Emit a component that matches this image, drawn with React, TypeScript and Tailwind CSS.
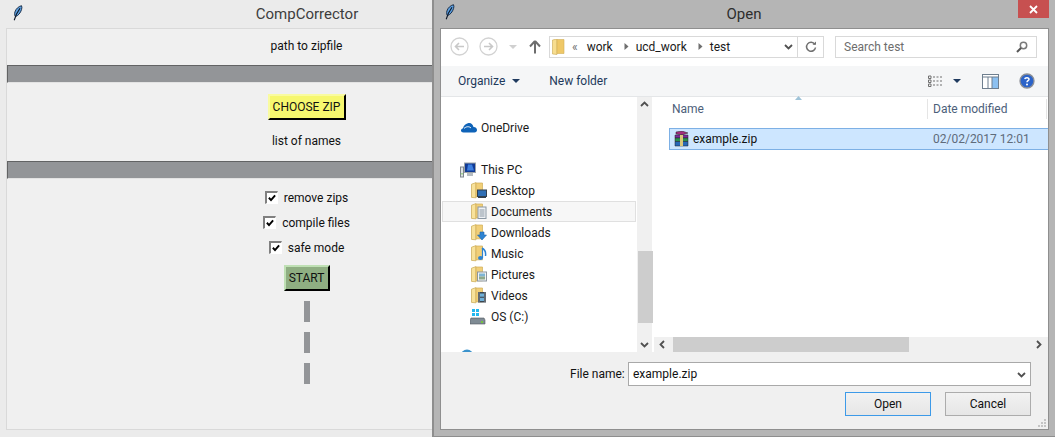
import React from "react";

const font = { fontFamily: 'Roboto,"Noto Sans",sans-serif' };

function Feather({ className = "" }: { className?: string }) {
  return (
    <svg width="10" height="16" viewBox="0 0 10 16" className={className}>
      <path d="M8.5 .7C5.6 1.4 2.8 3.8 1.9 7 1.4 9 1.6 10.8 2.4 11.6 5.2 10.8 7.6 7.8 8.6 4.4 9 3 9 1.6 8.5 .7Z" fill="#5b9fe0" stroke="#10233d" strokeWidth=".9" />
      <path d="M7 3.2 3.4 9.2 1.2 15.2" fill="none" stroke="#0b1626" strokeWidth="1.1" />
    </svg>
  );
}

function Sunken() {
  return <div className="h-[18px] w-full shrink-0 border-t border-l border-b border-t-[#626364] border-l-[#626364] border-b-[#e3e3e3] bg-[#939598]" />;
}

function Check({ label }: { label: string }) {
  return (
    <div className="flex h-[25px] items-center gap-[6px] text-[12px] text-[#111]">
      <div className="flex h-[13px] w-[13px] items-center justify-center border-t-2 border-l-2 border-r border-b border-t-[#808080] border-l-[#808080] border-r-white border-b-white bg-white">
        <svg width="8" height="8" viewBox="0 0 9 9"><path d="M1 4.2 3.4 6.8 8 1.6" fill="none" stroke="#000" strokeWidth="2.200" /></svg>
      </div>
      <span className="leading-none">{label}</span>
    </div>
  );
}

function FolderBase({ children }: { children?: React.ReactNode }) {
  return (
    <svg width="16" height="17" viewBox="0 0 16 17" className="shrink-0">
      <path d="M.5 2.2 5 .6V15.8L.5 15.4Z" fill="#f8e29b" stroke="#c9a850" strokeWidth=".7" />
      <path d="M5 1H11.500V14.800H5Z" fill="#f1cf78" stroke="#d0ae58" strokeWidth=".7" />
      {children}
    </svg>
  );
}

function NavIcon({ kind }: { kind: string }) {
  if (kind === "desktop")
    return <FolderBase><rect x="6.5" y="8" width="9" height="6.5" fill="#2f6fb5" stroke="#33414f" /><rect x="7" y="14.5" width="8" height="1.5" fill="#33414f" /></FolderBase>;
  if (kind === "documents")
    return <FolderBase><rect x="7" y="4" width="8" height="11.5" fill="#eef1f4" stroke="#8a97a3" /><path d="M8.5 7h5M8.5 9h5M8.5 11h5M8.5 13h5" stroke="#8a97a3" /></FolderBase>;
  if (kind === "downloads")
    return <FolderBase><path d="M9 8h4v3h2.5L11 16 6.5 11H9Z" fill="#2d83d2" stroke="#1e65ad" strokeWidth=".6" /></FolderBase>;
  if (kind === "music")
    return <FolderBase><path d="M11 3c3 1.500 4 4.500 3.500 8" fill="none" stroke="#2d83d2" strokeWidth="1.500" /><ellipse cx="9.500" cy="13" rx="2.500" ry="2" fill="#2d83d2" /><path d="M11.500 13V3" stroke="#2d83d2" strokeWidth="1.200" /></FolderBase>;
  if (kind === "pictures")
    return <FolderBase><rect x="6.500" y="6" width="9" height="9" fill="#f2f4f5" stroke="#8c969e" /><rect x="8" y="7.500" width="6" height="3" fill="#7fb5d5" /><rect x="8" y="10.500" width="6" height="3" fill="#8fa98c" /></FolderBase>;
  return <FolderBase><rect x="7" y="5" width="8" height="10.500" fill="#3c4650" /><rect x="9" y="6.500" width="4" height="3.200" fill="#6fb0d8" /><rect x="9" y="10.800" width="4" height="3.200" fill="#6fb0d8" /><path d="M8 5.500v10M14 5.500v10" stroke="#d5d9dc" strokeDasharray="1 1" /></FolderBase>;
}

function NavItem({ kind, label, active }: { kind: string; label: string; active?: boolean }) {
  return (
    <div className={`ml-[1px] flex h-[21px] w-[194px] shrink-0 items-center gap-[4px] text-[12px] text-[#1a1a1a] ${active ? "border border-[#e0e0e0] bg-[#f7f7f7] pl-[28px]" : "pl-[29px]"}`}>
      <NavIcon kind={kind} />
      <span className="leading-none">{label}</span>
    </div>
  );
}

function Chevron({ dir }: { dir: "up" | "down" | "left" | "right" }) {
  const d = { up: "M1 6 4.500 2.500 8 6", down: "M1 3 4.500 6.500 8 3", left: "M6 1 2.500 4.500 6 8", right: "M3 1 6.500 4.500 3 8" }[dir];
  return <svg width="9" height="9" viewBox="0 0 9 9"><path d={d} fill="none" stroke="#505050" strokeWidth="1.800" /></svg>;
}

function Circle({ left }: { left?: boolean }) {
  return (
    <svg width="19" height="19" viewBox="0 0 19 19">
      <circle cx="9.500" cy="9.500" r="8.500" fill="#fff" stroke="#d2d2d2" strokeWidth="1.300" />
      <path d={left ? "M14 9.500H6M9 6 5.500 9.500 9 13" : "M5 9.500H13M10 6 13.500 9.500 10 13"} fill="none" stroke="#c8c8c8" strokeWidth="1.600" />
    </svg>
  );
}

function Crumb() {
  return <svg width="5" height="7" viewBox="0 0 5 7"><path d="M.5 0 4.500 3.500 .5 7Z" fill="#6f6f6f" /></svg>;
}

function Caret({ color = "#1f3a5f" }: { color?: string }) {
  return <svg width="8" height="4" viewBox="0 0 8 4"><path d="M0 0H8L4 4Z" fill={color} /></svg>;
}

export default function App() {
  return (
    <div style={font} className="relative h-[437px] w-[1055px] overflow-hidden bg-[#ebebeb]">
      {/* back window */}
      <div className="absolute left-0 top-0 flex h-[437px] w-[612px] flex-col bg-[#ebebeb]">
        <div className="relative flex h-[28px] shrink-0 items-center justify-center pl-[2px] text-[15px] text-[#3d3d3d]">
          <Feather className="absolute left-[13px] top-[5px]" />
          <span>CompCorrector</span>
        </div>
        <div className="mx-[6px] mb-[7px] flex flex-1 flex-col items-center border border-[#d9d9d9] border-r-0 bg-[#f0f0f0] text-[12px] text-[#111]">
          <div className="flex h-[36px] shrink-0 items-center pb-[2px]">path to zipfile</div>
          <Sunken />
          <button className="mt-[11px] flex h-[26px] w-[78px] items-center justify-center border-2 border-t-[#f9fba0] border-l-[#f9fba0] border-r-black border-b-black bg-[#f6f76f] text-[12px] text-[#111]">CHOOSE ZIP</button>
          <div className="flex h-[41px] shrink-0 items-center">list of names</div>
          <Sunken />
          <div className="mt-[6px] flex flex-col items-center">
            <Check label="remove zips" />
            <Check label="compile files" />
            <Check label="safe mode" />
          </div>
          <button className="mt-[5px] flex h-[26px] w-[46px] items-center justify-center border-2 border-t-[#bfe0b4] border-l-[#bfe0b4] border-r-black border-b-black bg-[#8fae82] text-[12px] text-[#111]">START</button>
          <div className="mt-[10px] flex flex-col gap-[10px]">
            <div className="h-[21px] w-[6px] bg-[#939598]" />
            <div className="h-[21px] w-[6px] bg-[#939598]" />
            <div className="h-[21px] w-[6px] bg-[#939598]" />
          </div>
        </div>
      </div>

      {/* dialog */}
      <div className="absolute left-[432px] top-0 flex h-[437px] w-[623px] flex-col border-l-2 border-b border-l-[#8e8e8e] border-b-[#8e8e8e] bg-[#b5b5b5]">
        <div className="relative flex h-[28px] shrink-0 items-center justify-center text-[15px] text-[#2e2e2e]">
          <Feather className="absolute left-[11px] top-[4px]" />
          <span className="pr-[1px]">Open</span>
          <div className="absolute right-[6px] top-0 flex h-[18px] w-[31px] items-center justify-center bg-[#c75050]">
            <svg width="9" height="9" viewBox="0 0 9 9"><path d="M1 1 8 8M8 1 1 8" stroke="#fff" strokeWidth="1.800" /></svg>
          </div>
        </div>
        <div className="ml-[6px] mr-[6px] flex h-[402px] w-[609px] flex-col border border-[#8f8f8f] bg-white text-[12px] text-[#1a1a1a]">
          {/* address */}
          <div className="flex h-[37px] shrink-0 items-center pb-[2px]">
            <div className="ml-[9px] flex items-center gap-[10px]">
              <Circle left />
              <Circle />
            </div>
            <div className="ml-[11px]"><Caret color="#d0d0d0" /></div>
            <svg width="12" height="14" viewBox="0 0 12 14" className="ml-[12px]"><path d="M6 1 1 6.500M6 1l5 5.500M6 1.500V13.500" fill="none" stroke="#6d6d6d" strokeWidth="2" /></svg>
            <div className="ml-[8px] flex h-[22px] w-[275px] items-center border border-[#d9d9d9]">
              <svg width="13" height="16" viewBox="0 0 13 16" className="ml-[2px] shrink-0">
                <path d="M.5 1 5 0V15.500L.5 15Z" fill="#f7dd8f" stroke="#c9a850" strokeWidth=".6" />
                <path d="M5 .500H12V14.500H5Z" fill="#efc867" stroke="#d0ae58" strokeWidth=".6" />
              </svg>
              <span className="ml-[7px] text-[#6f6f6f]">«</span>
              <span className="ml-[9px]">work</span>
              <span className="ml-[11px]"><Crumb /></span>
              <span className="ml-[7px]">ucd_work</span>
              <span className="ml-[11px]"><Crumb /></span>
              <span className="ml-[7px]">test</span>
              <span className="ml-auto mr-[4px]"><Chevron dir="down" /></span>
              <div className="flex h-full w-[26px] items-center justify-center border-l border-[#d9d9d9]">
                <svg width="12" height="12" viewBox="0 0 12 12"><path d="M9.800 3.300A4.500 4.500 0 1 0 10.500 6.500" fill="none" stroke="#707070" strokeWidth="1.500" /><path d="M7.500 3.800H11V.4Z" fill="#707070" /></svg>
              </div>
            </div>
            <div className="ml-[11px] flex h-[22px] w-[202px] items-center border border-[#d9d9d9] pl-[8px] text-[#6d6d6d]">
              <span>Search test</span>
              <svg width="12" height="12" viewBox="0 0 12 12" className="ml-auto mr-[8px]"><circle cx="7.500" cy="4.500" r="3.200" fill="none" stroke="#7a7a7a" strokeWidth="1.500" /><path d="M5 7 1 11" stroke="#555" strokeWidth="2" /></svg>
            </div>
          </div>
          {/* command bar */}
          <div className="flex h-[31px] shrink-0 items-center border-b border-[#e4e6e8] bg-[#f5f6f7] text-[#1e395b]">
            <span className="ml-[17px]">Organize</span>
            <span className="ml-[7px]"><Caret /></span>
            <span className="ml-[29px]">New folder</span>
            <svg width="15" height="13" viewBox="0 0 15 13" className="ml-auto"><path d="M1.500 1h2.500v2.500H1.500ZM1.500 5h2.500v2.500H1.500ZM1.500 9h2.500v2.500H1.500Z" fill="none" stroke="#6f6f6f" /><path d="M6 2h2M9.500 2h2M13 2h2M6 6h2M9.500 6h2M13 6h2M6 10h2M9.500 10h2M13 10h2" stroke="#6f6f6f" /></svg>
            <span className="ml-[11px]"><Caret /></span>
            <svg width="17" height="15" viewBox="0 0 17 15" className="ml-[21px]"><rect x=".5" y=".5" width="16" height="14" fill="#fff" stroke="#6f7f8f" /><rect x="10" y="3" width="6" height="11" fill="#8cc0f0" /><path d="M.5 3H16.500M6 3V14.500M10 3V14.500" stroke="#6f7f8f" /></svg>
            <svg width="16" height="16" viewBox="0 0 16 16" className="ml-[20px] mr-[13px]"><circle cx="8" cy="8" r="7" fill="#2b63c9" stroke="#8b8f96" strokeWidth="1.300" /><path d="M5.800 6.200C6 4.300 10 4 10 6.200 10 7.700 8 7.700 8 9.300" fill="none" stroke="#fff" strokeWidth="1.500" /><circle cx="8" cy="11.500" r="1" fill="#fff" /></svg>
          </div>
          {/* panes */}
          <div className="flex min-h-0 flex-1">
            <div className="flex w-[196px] shrink-0 flex-col overflow-hidden pt-[20px]">
              <div className="flex h-[21px] shrink-0 items-center gap-[4px] pl-[19px]">
                <svg width="17" height="11" viewBox="0 0 17 11" className="shrink-0"><path d="M3.500 10.500C.5 10.500 0 7 3 6.300 3.500 3.500 6 1.500 8.500 1 11 .5 13 2.500 13.500 5c2.500 0 3.500 1.500 3.500 3s-1 2.500-2.500 2.500Z" fill="#0f63b8" /><path d="M4 6.500C6 4.500 9 4 11 6" fill="none" stroke="#fff" /></svg>
                <span className="leading-none">OneDrive</span>
              </div>
              <div className="mt-[21px] flex h-[21px] shrink-0 items-center gap-[5px] pl-[19px]">
                <svg width="16" height="16" viewBox="0 0 16 16" className="shrink-0"><rect x="0.500" y="5" width="3" height="10" fill="#dfe3e6" stroke="#7f878e" /><rect x="1.500" y="11" width="1" height="1.500" fill="#66c33f" /><rect x="4.500" y="1" width="11" height="9.500" fill="#103a96" stroke="#9ca3a8" /><path d="M8 2.500h4l2 6H7Z" fill="#3d7fe0" /><rect x="7" y="11" width="6" height="3" fill="#b6bcc1" /></svg>
                <span className="leading-none">This PC</span>
              </div>
              <NavItem kind="desktop" label="Desktop" />
              <NavItem kind="documents" label="Documents" active />
              <NavItem kind="downloads" label="Downloads" />
              <NavItem kind="music" label="Music" />
              <NavItem kind="pictures" label="Pictures" />
              <NavItem kind="videos" label="Videos" />
              <div className="flex h-[21px] shrink-0 items-center gap-[5px] pl-[29px]">
                <svg width="16" height="16" viewBox="0 0 16 16" className="shrink-0"><path d="M2 0h3v3H2ZM6 0h3v3H6ZM2 4h3v3H2ZM6 4h3v3H6Z" fill="#22b8f0" /><path d="M1 9h13l1 2v4H0v-4Z" fill="#7f8b94" stroke="#50595f" strokeWidth=".6" /><rect x="11" y="12" width="2" height="2" fill="#73c43f" /></svg>
                <span className="leading-none">OS (C:)</span>
              </div>
              <div className="mt-[22px] shrink-0 pl-[19px]">
                <svg width="14" height="14" viewBox="0 0 14 14"><circle cx="7" cy="7" r="6.500" fill="#3a92cc" /><path d="M3 3c3 0 3 3 5 3s2 3 0 4-4-1-5-3Z" fill="#69b94b" /></svg>
              </div>
            </div>
            <div className="flex w-[15px] shrink-0 flex-col items-center justify-between bg-[#f0f0f0] py-[3px]">
              <Chevron dir="up" />
              <div className="absolute left-[204px] top-[251px] h-[72px] w-[15px] bg-[#cdcdcd]" />
              <Chevron dir="down" />
            </div>
            <div className="ml-[2px] flex min-w-0 flex-1 flex-col">
              <div className="relative flex h-[22px] shrink-0 items-center pt-[2px] text-[#4c607a]">
                <span className="ml-[18px] w-[255px]">Name</span>
                <div className="absolute left-[141px] top-[-1px]"><svg width="7" height="4" viewBox="0 0 7 4"><path d="M0 4 3.500 0 7 4Z" fill="#9fc3d8" /></svg></div>
                <div className="flex h-full w-[120px] items-center border-l border-r border-[#e5e5e5] pl-[5px]">Date modified</div>
              </div>
              <div className="mt-[9px] ml-[15px] flex h-[22px] shrink-0 items-center border border-[#7db0e5] border-r-0 bg-[#cde6ff]">
                <svg width="17" height="16" viewBox="0 0 17 16" className="ml-[3px] shrink-0">
                  <path d="M3 1 9 0l6 2-6 2-6-1Z" fill="#a32d7e" stroke="#222" strokeWidth=".5" />
                  <path d="M2 4h13v3H2Z" fill="#7d2c9e" stroke="#222" strokeWidth=".5" />
                  <path d="M2 7h13v3.500H2Z" fill="#2b8f4c" stroke="#222" strokeWidth=".5" />
                  <path d="M2 10.500h13V15H2Z" fill="#2768b8" stroke="#222" strokeWidth=".5" />
                  <rect x="7" y="4" width="3" height="11" fill="#d9c77a" />
                </svg>
                <span className="ml-[3px] w-[240px] shrink-0 leading-none text-[#111]">example.zip</span>
                <span className="text-[#5f6b7a]">02/02/2017 12:01</span>
              </div>
              <div className="flex-1" />
              <div className="flex h-[15px] shrink-0 items-center bg-[#f0f0f0] pl-[4px]">
                <Chevron dir="left" />
                <div className="ml-[6px] h-full w-[236px] bg-[#cdcdcd]" />
                <span className="ml-auto mr-[5px]"><Chevron dir="right" /></span>
              </div>
            </div>
          </div>
          {/* footer */}
          <div className="relative h-[77px] shrink-0 bg-[#f0f0f0]">
            <div className="flex items-center pt-[10px]">
              <span className="ml-[129px] w-[58px] text-[#111]">File name:</span>
              <div className="flex h-[24px] w-[403px] items-center border border-[#a9a9a9] bg-white pl-[4px] text-[#111]">
                <span>example.zip</span>
                <span className="ml-auto mr-[4px]"><Chevron dir="down" /></span>
              </div>
            </div>
            <div className="mt-[6px] flex justify-end gap-[14px] pr-[17px]">
              <button className="h-[24px] w-[86px] border border-[#3d9ae8] bg-gradient-to-b from-[#f2f2f2] to-[#e6e6e6] text-[12px] text-[#111]">Open</button>
              <button className="h-[24px] w-[86px] border border-[#acacac] bg-gradient-to-b from-[#f2f2f2] to-[#e6e6e6] text-[12px] text-[#111]">Cancel</button>
            </div>
            <svg width="9" height="9" viewBox="0 0 9 9" className="absolute bottom-[2px] right-[2px]"><path d="M7 1h2v2H7ZM4 4h2v2H4ZM7 4h2v2H7ZM1 7h2v2H1ZM4 7h2v2H4ZM7 7h2v2H7Z" fill="#c4c4c4" /></svg>
          </div>
        </div>
      </div>
    </div>
  );
}
